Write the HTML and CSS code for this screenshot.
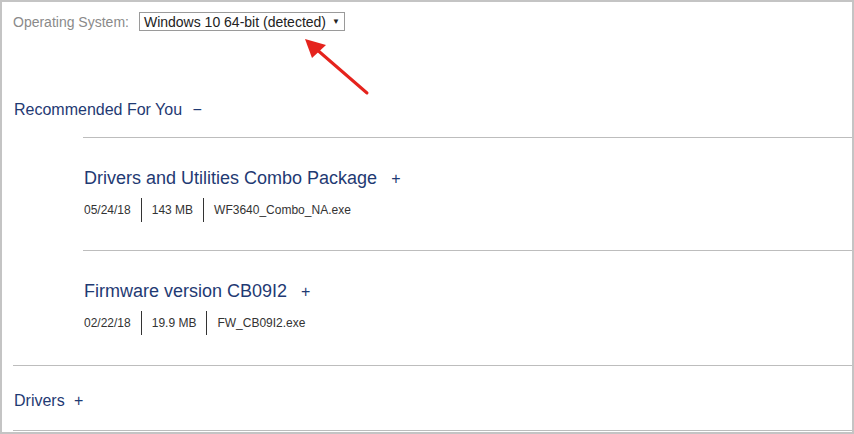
FILE: index.html
```html
<!DOCTYPE html>
<html>
<head>
<meta charset="utf-8">
<link rel="stylesheet" href="styles.css">
</head>
<body>
<div class="frame">
  <div class="os-row">
    <span class="os-label">Operating System:</span>
    <div class="os-select"><span>Windows 10 64-bit (detected)</span><span class="caret">&#9660;</span></div>
  </div>

  <div class="section-head rec-head">Recommended For You <span class="toggle">&minus;</span></div>

  <div class="items">
    <div class="item">
      <div class="item-title">Drivers and Utilities Combo Package <span class="toggle">+</span></div>
      <div class="meta">
        <span class="meta-cell first">05/24/18</span>
        <span class="meta-cell">143 MB</span>
        <span class="meta-cell last">WF3640_Combo_NA.exe</span>
      </div>
    </div>
    <div class="item">
      <div class="item-title">Firmware version CB09I2 <span class="toggle">+</span></div>
      <div class="meta">
        <span class="meta-cell first">02/22/18</span>
        <span class="meta-cell">19.9 MB</span>
        <span class="meta-cell last">FW_CB09I2.exe</span>
      </div>
    </div>
  </div>

  <div class="drivers">
    <div class="section-head">Drivers <span class="toggle">+</span></div>
  </div>

  <svg class="arrow" width="80" height="70" viewBox="0 0 80 70">
    <line x1="66" y1="58" x2="14" y2="13" stroke="#e5231d" stroke-width="3" stroke-linecap="round"/>
    <polygon points="4,4 25,10 11,23" fill="#e5231d"/>
  </svg>
</div>
</body>
</html>
```
FILE: styles.css
```css
html, body {
  margin: 0;
  padding: 0;
  background: #ffffff;
}

.frame {
  position: relative;
  width: 854px;
  height: 434px;
  box-sizing: border-box;
  border: 2px solid #c4c4c4;
  overflow: hidden;
  font-family: "Liberation Sans", Arial, sans-serif;
  background: #ffffff;
}

.os-row {
  display: flex;
  align-items: center;
  margin-top: 10px;
  padding-left: 11px;
  height: 19px;
}

.os-label {
  color: #8a8a8a;
  font-size: 14px;
  margin-right: 10px;
}

.os-select {
  display: flex;
  align-items: center;
  box-sizing: border-box;
  width: 206px;
  height: 19px;
  border: 1px solid #9a9a9a;
  padding-left: 4px;
  color: #222222;
  font-size: 14px;
}

.caret {
  font-size: 8px;
  margin-left: 6px;
  color: #222222;
}

.section-head {
  color: #1f3a73;
  font-size: 16px;
  line-height: 20px;
  height: 20px;
  padding-left: 12px;
}

.rec-head {
  margin-top: 69px;
}

.toggle {
  margin-left: 6px;
}

.items {
  margin-left: 81px;
  margin-top: 17px;
}

.item {
  border-top: 1px solid #bdbdbd;
  padding: 28px 0 28px 1px;
}

.item-title {
  color: #1f3a73;
  font-size: 18px;
  line-height: 24px;
  height: 24px;
}

.item-title .toggle {
  margin-left: 9px;
  font-size: 16px;
}

.meta {
  display: flex;
  margin-top: 8px;
  height: 24px;
  align-items: stretch;
}

.meta-cell {
  display: flex;
  align-items: center;
  font-size: 12px;
  color: #333333;
  padding: 0 10px;
  border-right: 1px solid #333333;
}

.meta-cell.first {
  padding-left: 0;
}

.meta-cell.last {
  border-right: none;
}

.drivers {
  margin-top: 2px;
  margin-left: 11px;
  border-top: 1px solid #bdbdbd;
  border-bottom: 1px solid #bdbdbd;
  padding: 25px 0 19px 0;
}

.drivers .section-head {
  padding-left: 1px;
}

.drivers .toggle {
  margin-left: 5px;
}

.arrow {
  position: absolute;
  left: 299px;
  top: 33px;
}
```
